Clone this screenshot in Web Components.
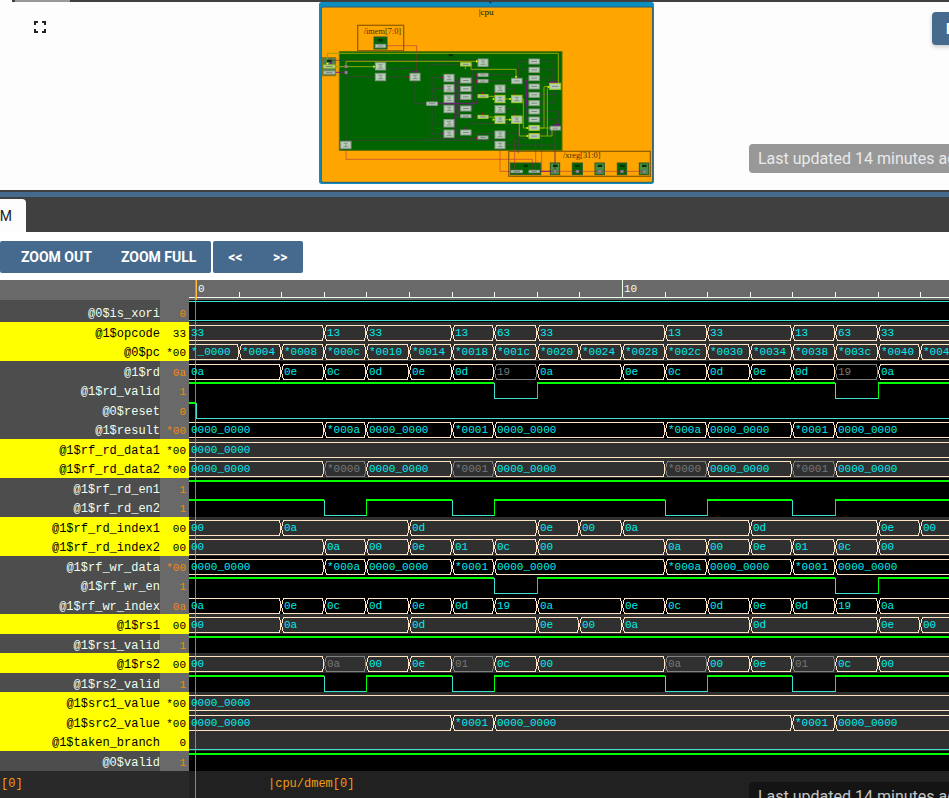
<!DOCTYPE html>
<html lang="en">
<head>
<meta charset="utf-8">
<title>CPU diagram and waveform</title>
<style>
html, body { height: 100%; margin: 0; }
body { overflow: hidden; background: #fdfdfd; font-family: Roboto, "Liberation Sans", sans-serif; }
</style>
</head>
<body>
<ide-app></ide-app>
<script>
const define = (name, html, setup) => {
  const template = document.createElement('template');
  template.innerHTML = html;
  customElements.define(name, class extends HTMLElement {
    constructor() {
      super();
      this.attachShadow({ mode: 'open' }).append(template.content.cloneNode(true));
    }
    connectedCallback() { if (setup) setup(this, this.shadowRoot); }
  });
};

define('update-note', `
<style>
:host { display: block; white-space: nowrap; font-size: 16px; line-height: 19px; padding: 5px 9px; border-radius: 4px;
  background: var(--note-bg, #989898); color: var(--note-fg, #e9e9e9); }
</style><slot></slot>`);

/* Block diagram: boxes are [x, y, width, height, highlighted] on a 1005 x 546 canvas */
const nodes = [
  [196,188,31,22],[196,220,31,22],[300,220,30,22],[92,424,31,22],[350,306,32,10],
  [402,223,30,22],[402,254,30,22],[402,285,30,22],[402,316,30,22],[402,359,30,22],[402,390,30,22],
  [452,188,31,10,1],[452,234,31,15],[452,259,31,15],[452,283,31,15],[452,318,31,15],[452,344,31,9],[452,390,31,15],
  [504,177,30,22],[504,220,30,9],[504,239,30,9],[504,284,30,9,1],[504,346,30,9,1],[504,408,30,9],
  [555,255,30,22],[555,286,30,22,1],[555,317,30,22],[555,348,30,22,1],[555,393,30,22],[555,424,30,22],
  [605,235,31,16],[605,286,31,22,1],[605,348,31,22,1],
  [657,177,31,15],[657,202,31,15],[657,227,31,15],[657,252,31,15],[657,277,31,15],[657,302,31,15],[657,327,31,15],[657,351,31,15],
  [657,376,31,15,1],[657,401,31,15,1],[719,250,33,18,1],[721,379,30,11],
  [603,511,34,7],[657,511,31,7],[196,133,31,10],[41,195,34,9,1],[41,213,34,9]
];
define('block-diagram', `
<style>:host { display: block; } svg { display: block; width: 100%; height: auto; }</style>
<svg viewBox="27 6 1005 546" role="img" aria-label="cpu block diagram">
  <rect x="27" y="6" width="1005" height="546" rx="8" fill="#0d8cbe"/>
  <rect x="34" y="21" width="994" height="526" rx="6" fill="#ffa500" stroke="#28607b" stroke-width="3"/>
  <path d="M538 6h6v4h-5z" fill="#123"/>
  <g fill="none" stroke="#976100" stroke-width="4">
    <rect x="143" y="76" width="138" height="76"/><rect x="596" y="454" width="425" height="75"/>
  </g>
  <g stroke="#28582a" stroke-width="3">
    <rect x="192" y="111" width="39" height="36" fill="#006400"/>
    <rect x="37" y="173" width="40" height="54" fill="#4d814d" stroke="#8a7010"/>
    <rect x="88" y="155" width="668" height="296" fill="#006400" stroke="#5a7000"/>
    <rect x="601" y="489" width="91" height="35" fill="#006400"/>
    <rect x="721" y="489" width="28" height="35" fill="#459045"/><rect x="787" y="489" width="30" height="35" fill="#006400"/>
    <rect x="855" y="489" width="28" height="35" fill="#459045"/><rect x="922" y="489" width="28" height="35" fill="#006400"/>
    <rect x="988" y="489" width="28" height="35" fill="#459045"/>
  </g>
  <g fill="none" stroke="#a52050" stroke-opacity=".5" stroke-width="3">
    <path d="M231 137H320V218M108 446V478H667V511M570 446V514H603M614 416V511M677 416V511M695 250V514M735 390V511M692 514H1003"/>
  </g>
  <g fill="none" stroke="#4b3c4b" stroke-width="2">
    <path d="M62 190V181H504M108 200V421H555M108 230H196M227 205H310V220M227 230H300M315 242V311H350M382 311H504M358 415V193H452M358 415H504M382 306L372 265H402M366 306V232H402M376 316V370H402M366 316V401H402M432 234H452M432 265H452M432 296H452M432 325H452M432 349H504M432 401H555M438 240V401M445 240V345M488 193V330M498 225V310M534 224H605M534 243H605M585 265H615V286M585 327H615V348M585 400H735V390M625 235V184H657M633 209H657M645 234H657M636 243H650V360H657M642 259H657M642 284H657M642 309H657M642 334H657M688 184H735V250M688 209H729V250M688 234H725V250M688 284H735V268M688 309H735V275M688 334H745V379M688 359H738V379M630 415H657M473 370H625V460M585 435H735V511"/>
  </g>
  <g fill="none" stroke="#75157d" stroke-width="4" stroke-opacity=".75">
    <path d="M383 311H498M435 240V400M448 240V345M498 228V255M650 240V320M308 214h16M715 247h27M733 374h18M463 381V390M75 217h30M692 514h30"/>
  </g>
  <g fill="none" stroke="#8fa500" stroke-width="3">
    <path d="M52 193V160H745V250M75 200H108V184H504M108 200H196M483 190V208H618V235M466 198V208M534 289H555M585 297H605M534 351H555M585 359H605M636 297H640V384H657M628 370V408H657M688 384H720M688 384H702V260H719M688 408H726V390M712 408V265"/>
  </g>
  <g fill="#eaff00"><path d="M190 196l7 4-7 4zM498 180l7 4-7 4zM49 189h7l-4 7zM548 293l7 4-7 4zM598 293l7 4-7 4zM548 355l7 4-7 4zM598 355l7 4-7 4zM650 380l7 4-7 4zM650 404l7 4-7 4zM713 257l7 4-7 4zM615 229h7l-4 7z"/></g>
  <g fill="#8b008b"><path d="M59 187h7l-4 7zM308 213h7l-3 7zM318 213h7l-3 7zM715 244h7l-3 7zM725 244h7l-3 7zM735 244h7l-3 7zM395 229l7 4-7 4zM395 260l7 4-7 4zM395 397l7 4-7 4zM497 309h8l-4-8zM730 373h7l-3 7zM742 373h7l-3 7z"/></g>
  <g fill="#b00c3c"><path d="M498 221l7 4-7 4zM498 240l7 4-7 4zM498 411l7 4-7 4zM294 228l6 3-6 3zM553 280h4v5h-4zM515 277h4v6h-4zM515 338h4v6h-4zM613 280h4v5h-4zM613 342h4v5h-4z"/></g>
  <g fill="#888" stroke="#774070"><rect x="104" y="195" width="9" height="9"/><rect x="104" y="213" width="9" height="9"/>
  <rect x="730" y="510" width="10" height="9"/><rect x="797" y="510" width="10" height="9"/><rect x="864" y="510" width="10" height="9"/><rect x="931" y="510" width="10" height="9"/><rect x="998" y="510" width="10" height="9"/></g>
  <g id="nodes"></g>
  <g font-family="Liberation Serif, serif" font-size="25" fill="#111">
    <text x="506" y="45" font-size="27">|cpu</text>
    <text x="161" y="101" fill="#4a3000">/imem[7:0]</text>
    <text x="759" y="474" fill="#4a3000">/xreg[31:0]</text>
  </g>
  <g fill="#053205"><path d="M205 117h14v7h-14zM416 162h13v7h-13zM51 179h14v7h-14zM641 494h13v7h-13zM729 494h14v7h-14zM795 494h14v7h-14zM863 494h14v7h-14zM930 494h14v7h-14zM996 494h14v7h-14z"/></g>
</svg>`, (host, root) => {
  root.getElementById('nodes').innerHTML = nodes.map(([x, y, w, h, hot]) =>
    `<rect x="${x}" y="${y}" width="${w}" height="${h}" fill="#b8ceb8" stroke="${hot ? '#a8c820' : '#8c968c'}" stroke-width="3"/>` +
    (h > 18 ? `<path d="M${x + 9} ${y + 6}h12M${x + 13} ${y + 11}h6M${x + 8} ${y + 16}h15" stroke="#66736a" stroke-width="2"/>`
            : `<path d="M${x + 7} ${y + h / 2}h${w - 14}" stroke="#7d8a80" stroke-width="3"/>`)).join('');
});

define('diagram-pane', `
<style>
:host { display: grid; grid-template-columns: 319fr 335fr 295fr; align-items: end; position: relative; height: 190px; overflow: hidden;
  background: #fdfdfd; box-sizing: border-box; padding-bottom: 6px; }
.edge { position: absolute; inset: 0 0 auto 12px; height: 2px; background: #404040; }
.thumb { display: block; width: 55px; height: 2px; margin-left: 3px; background: #999; }
.fit { align-self: start; justify-self: start; margin: 17px 0 0 30px; width: 20px; height: 20px; padding: 0; border: 0; background: none; }
.fit svg { display: block; }
.side { position: absolute; left: calc(100% - 17px); top: 12px; height: 33px; padding: 0 14px; border: 0; border-radius: 4px;
  background: #456a8d; color: #fff; font: 700 14px Roboto, sans-serif; box-shadow: 0 2px 4px #0003; white-space: nowrap; }
update-note { position: absolute; left: calc(100% - 200px); bottom: 17px; }
</style>
<div class="edge"><span class="thumb"></span></div>
<button class="fit" aria-label="Fit diagram"><svg width="20" height="20"><path d="M5 8V5H8M12 5h3V8M15 12v3H12M8 15H5V12" fill="none" stroke="#222" stroke-width="2"/></svg></button>
<block-diagram></block-diagram>
<button class="side">DIAGRAM</button>
<update-note>Last updated 14 minutes ago</update-note>`);

define('tab-bar', `
<style>
:host { display: flex; align-items: end; height: 35px; background: #404040; border-top: 5px solid #456a8d; box-shadow: 0 -2px #404040; margin-top: 2px; }
button { display: flex; justify-content: end; align-items: center; width: 26px; height: 33px; padding: 0 14px 0 0; border: 0; border-radius: 0 4px 0 0;
  overflow: hidden; background: #fdfdfd; color: #222; font: 14px Roboto, sans-serif; }
</style>
<button><slot></slot></button>`);

define('tool-group', `<style>:host { display: flex; background: #456a8d; border-radius: 2px; }</style><slot></slot>`);
define('tool-button', `
<style>
:host { display: block; }
button { width: 100%; height: 32px; padding: 0 15px 0 14px; border: 0; background: none; color: #fff; font: 700 14px Roboto, sans-serif; }
</style><button><slot></slot></button>`);
define('wave-toolbar', `
<style>
:host { display: flex; gap: 2px; align-items: center; padding: 9px 0 7px; background: #fff; }
.zoom { padding-left: 7px; }
.step { display: grid; grid-template-columns: 45px 45px; }
</style>
<tool-group class="zoom"><tool-button>ZOOM OUT</tool-button><tool-button>ZOOM FULL</tool-button></tool-group>
<tool-group class="step"><tool-button>&lt;&lt;</tool-button><tool-button>&gt;&gt;</tool-button></tool-group>`);

/* Horizontal position of a clock cycle inside the wave column */
const at = cycle => 7 + Math.round(cycle * 42.6);
const LAST = 60;

define('time-ruler', `
<style>:host { display: block; height: 20px; margin-left: 189px; overflow: hidden; } svg { display: block; width: 100%; height: 20px; }</style>
<svg><path fill="none" stroke="#f0fff0" shape-rendering="crispEdges"/><g font-family="Liberation Mono, monospace" font-size="11" fill="#f0fff0"></g></svg>`, (host, root) => {
  let d = 'M0 17.500H3000', labels = '';
  for (let k = 0; k < LAST; k++) {
    const x = at(k) + 0.5;
    d += k % 10 ? `M${x} 12V17` : `M${x} 0V17`;
    if (k % 10 === 0) labels += `<text x="${at(k) + 2}" y="12">${k}</text>`;
  }
  root.querySelector('path').setAttribute('d', d);
  root.querySelector('g').innerHTML = labels;
});

const busPath = (x0, x1, first) => first
  ? `M0 3.500H${x1 - 2}L${x1 - 1} 6V9L${x1} 11L${x1 - 1} 13V16L${x1 - 2} 18.500H0`
  : `M${x0 + 3} 3.500H${x1 - 2}L${x1 - 1} 6V9L${x1} 11L${x1 - 1} 13V16L${x1 - 2} 18.500H${x0 + 3}L${x0 + 1} 16V13L${x0} 11L${x0 + 1} 9V6Z`;

define('signal-row', `
<style>
:host { display: grid; grid-template-columns: 160px 29px minmax(0, 1fr); min-height: 0; overflow: hidden;
  font: 12px/20px "Liberation Mono", monospace; background: #000; color: #f0fff0; }
span { text-align: right; white-space: nowrap; padding-top: 2px; }
.name { background: #4d4d4d; }
.value { background: #696969; color: #ee8a11; font-size: 11px; padding-right: 3px; }
:host([marked]) { background: #303030; color: #000; }
:host([marked]) span { background: #ff0; color: #000; }
svg { display: block; width: 100%; height: 20px; }
path { shape-rendering: crispEdges; }
</style>
<span class="name"></span><span class="value"></span><svg></svg>`, (host, root) => {
  root.querySelector('.name').textContent = host.getAttribute('name');
  root.querySelector('.value').textContent = host.getAttribute('value');
  const parts = host.getAttribute('wave').split(' ').map(part => part.split(':'));
  let out = '';
  parts.forEach(([start, label], i) => {
    const from = Number(start), x0 = i ? at(from) : 0;
    const x1 = i + 1 < parts.length ? at(Number(parts[i + 1][0])) : 3000;
    if (label === 'H' || label === 'L') {
      const high = label === 'H', color = high ? '#00ff00' : '#40e0d0';
      out += high ? `<path d="M${x0} 3H${x1}" stroke="${color}" stroke-width="2"/>` : `<path d="M${x0} 18.500H${x1}" stroke="${color}"/>`;
      if (i) out += `<path d="M${x0 + 0.5} 3V19" stroke="${color}"/>`;
    } else {
      const dim = label.endsWith('~'), text = label.replace('~', '');
      out += `<path d="${busPath(x0, x1, !i)}" fill="none" stroke="${dim ? '#808080' : '#ffe4c4'}"/>` +
        `<text x="${i ? x0 + 3 : 2}" y="14" font-size="11" ${dim ? 'fill="#777"' : 'fill="#00ecec"'}>${text}</text>`;
    }
  });
  root.querySelector('svg').innerHTML = out;
});

const zero = '0000_0000';
const enable = '0:H 3:L 4:H 6:L 7:H 11:L 12:H 14:L 15:H';
const writes = '0:H 7:L 8:H 15:L 16:H';
const result = `0:${zero} 3:*000a 4:${zero} 6:*0001 7:${zero} 11:*000a 12:${zero} 14:*0001 15:${zero}`;
const dest = '0:0a 2:0e 3:0c 4:0d 5:0e 6:0d 7:19 8:0a 10:0e 11:0c 12:0d 13:0e 14:0d 15:19 16:0a';
const source1 = '0:00 2:0a 5:0d 8:0e 9:00 10:0a 13:0d 16:0e 17:00';
const source2 = '0:00 3:0a 4:00 5:0e 6:01 7:0c 8:00 11:0a 12:00 13:0e 14:01 15:0c 16:00';
const pc = Array.from({ length: 19 }, (_, k) => `${k}:${k ? '*' : '*_'}${(k * 4).toString(16).padStart(4, '0')}`).join(' ');
const signals = [
  ['@0$is_xor', '0', '0:L'],
  ['@0$is_xori', '0', '0:L'],
  ['@1$opcode', '33', '0:33 3:13 4:33 6:13 7:63 8:33 11:13 12:33 14:13 15:63 16:33', 1],
  ['@0$pc', '*00', pc, 1],
  ['@1$rd', '0a', dest.replaceAll(':19', ':19~')],
  ['@1$rd_valid', '1', writes],
  ['@0$reset', '0', '-1:H 0:L'],
  ['@1$result', '*00', result],
  ['@1$rf_rd_data1', '*00', `0:${zero}`, 1],
  ['@1$rf_rd_data2', '*00', result.replaceAll('*000a', '*0000~').replaceAll('*0001', '*0001~'), 1],
  ['@1$rf_rd_en1', '1', '0:H'],
  ['@1$rf_rd_en2', '1', enable],
  ['@1$rf_rd_index1', '00', source1, 1],
  ['@1$rf_rd_index2', '00', source2, 1],
  ['@1$rf_wr_data', '*00', result],
  ['@1$rf_wr_en', '1', writes],
  ['@1$rf_wr_index', '0a', dest],
  ['@1$rs1', '00', source1, 1],
  ['@1$rs1_valid', '1', '0:H'],
  ['@1$rs2', '00', source2.replaceAll(':0a', ':0a~').replaceAll(':01', ':01~'), 1],
  ['@1$rs2_valid', '1', enable],
  ['@1$src1_value', '*00', `0:${zero}`, 1],
  ['@1$src2_value', '*00', `0:${zero} 6:*0001 7:${zero} 14:*0001 15:${zero}`, 1],
  ['@1$taken_branch', '0', '0:L', 1],
  ['@0$valid', '1', '0:H']
];

define('signal-list', `
<style>
:host { display: flex; flex-direction: column; justify-content: end; height: 471px; overflow: hidden; background: #696969; }
.rows { display: grid; flex: none; grid-template-rows: 19px repeat(11, 20px 19px) 20px 20px; }
</style><div class="rows"></div>`, (host, root) => {
  root.querySelector('.rows').innerHTML = signals.map(([name, value, wave, marked]) =>
    `<signal-row name="${name}" value="${value}" wave="${wave}" ${marked ? 'marked' : ''}></signal-row>`).join('');
});

define('memory-view', `
<style>
:host { display: grid; grid-template-columns: 189px minmax(0, 1fr); flex: 1; min-height: 0; overflow: hidden; position: relative;
  font: 12px/20px "Liberation Mono", monospace; color: #f39c12; }
div { overflow: hidden; padding-top: 3px; white-space: nowrap; }
.left { background: #292929; padding-left: 1px; }
.right { background: #212121; padding-left: 79px; }
update-note { position: absolute; left: calc(100% - 200px); top: 11px; font-family: Roboto, sans-serif; --note-bg: #141414; --note-fg: #c4c4c4; }
</style>
<div class="left">[0]<br>[10]</div><div class="right">|cpu/dmem[0]<br>|cpu/dmem[10]</div>
<update-note>Last updated 14 minutes ago</update-note>`);

define('wave-view', `
<style>
:host { display: flex; flex-direction: column; flex: 1; min-height: 0; position: relative; background: #696969; }
.cursor { position: absolute; top: 0; bottom: 0; left: 195px; width: 1px; background: #d99a3dcc; }
.cursor::before { content: ""; display: block; width: 1px; height: 20px; margin-left: 1px; background: #ffb83d; }
</style>
<time-ruler></time-ruler><signal-list></signal-list><memory-view></memory-view><div class="cursor"></div>`);

define('ide-app', `
<style>:host { display: flex; flex-direction: column; height: 100vh; overflow: hidden; }</style>
<diagram-pane></diagram-pane>
<tab-bar>WAVEFORM</tab-bar>
<wave-toolbar></wave-toolbar>
<wave-view></wave-view>`);
</script>
</body>
</html>
